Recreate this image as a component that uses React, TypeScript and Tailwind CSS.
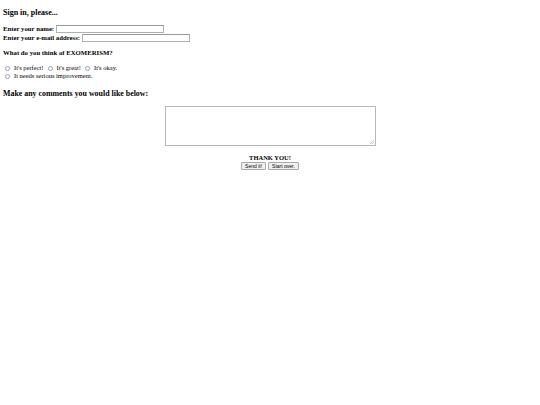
const serif = { fontFamily: '"Liberation Serif", "Times New Roman", serif' }
const sans = { fontFamily: '"Liberation Sans", Arial, sans-serif' }

function Radio({ label, first }: { label: string; first?: boolean }) {
  return (
    <label className={`inline-flex items-center ${first ? "ml-[2px]" : "ml-[4px]"}`}>
      <span className="inline-block w-[5px] h-[5px] rounded-full border-[0.5px] border-gray-400 bg-white mr-[4px]" />
      {label}
    </label>
  )
}

export default function App() {
  return (
    <div className="w-[540px] h-[405px] bg-white text-black px-[3px] pt-[8px]" style={serif}>
      <h3 className="text-[8px] font-bold leading-[9px] mb-[7px]">Sign in, please...</h3>

      <div className="text-[6.75px] font-bold leading-[9px]">
        <div className="flex items-center">
          <span>Enter your name:</span>
          <span className="inline-block w-[108px] h-[8px] border border-[#b0b0b0] border-t-[#999] ml-[2px]" />
        </div>
        <div className="flex items-center">
          <span>Enter your e-mail address:</span>
          <span className="inline-block w-[108px] h-[8px] border border-[#b0b0b0] border-t-[#999] ml-[2px]" />
        </div>
      </div>

      <p className="text-[6.75px] font-bold leading-[8px] mt-[7px] mb-[7px]">What do you think of EXOMERISM?</p>

      <div className="text-[6.5px] leading-[8px]">
        <div className="flex items-center">
          <Radio first label="It's perfect!" />
          <Radio label="It's great!" />
          <Radio label="It's okay." />
        </div>
        <div className="flex items-center">
          <Radio first label="It needs serious improvement." />
        </div>
      </div>

      <h3 className="text-[7.9px] font-bold leading-[9px] mt-[9px] mb-[8px]">Make any comments you would like below:</h3>

      <div className="flex flex-col items-center">
        <div className="relative w-[211px] h-[40px] border border-[#b8b8b8]">
          <svg className="absolute right-[1px] bottom-[1px]" width="4" height="4" viewBox="0 0 4 4">
            <path d="M4 0 L0 4 M4 2 L2 4" stroke="#9ca3af" strokeWidth="0.6" />
          </svg>
        </div>
        <p className="text-[6.5px] font-bold leading-[8px] mt-[8px]">THANK YOU!</p>
        <div className="flex gap-[2px]">
          <button className="h-[8px] px-[3px] text-[5px] leading-[6px] border border-[#aaa] bg-[#efefef] rounded-[1px]" style={sans}>Send it!</button>
          <button className="h-[8px] px-[3px] text-[5px] leading-[6px] border border-[#aaa] bg-[#efefef] rounded-[1px]" style={sans}>Start over.</button>
        </div>
      </div>
    </div>
  )
}
